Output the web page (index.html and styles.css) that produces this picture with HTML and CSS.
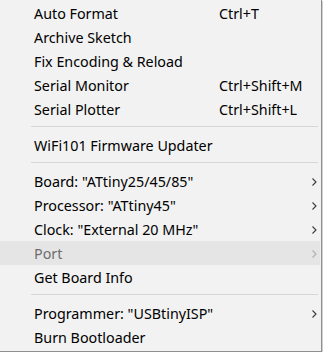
FILE: index.html
```html
<!DOCTYPE html>
<html lang="en">
<head>
    <meta charset="UTF-8">
    <meta name="viewport" content="width=device-width, initial-scale=1.0">
    <title>Tools menu</title>
    <link rel="stylesheet" href="styles.css">
</head>
<body>
    <div class="menu">
        <div class="item"><span>Auto Format</span><span class="accel">Ctrl+T</span></div>
        <div class="item"><span>Archive Sketch</span></div>
        <div class="item"><span>Fix Encoding &amp; Reload</span></div>
        <div class="item"><span>Serial Monitor</span><span class="accel">Ctrl+Shift+M</span></div>
        <div class="item"><span>Serial Plotter</span><span class="accel">Ctrl+Shift+L</span></div>

        <div class="separator"></div>

        <div class="item"><span>WiFi101 Firmware Updater</span></div>

        <div class="separator"></div>

        <div class="item sub"><span>Board: "ATtiny25/45/85"</span>
            <svg class="arrow" width="5" height="8" viewBox="0 0 5 8"><path d="M0.5 0.5 L4 4 L0.5 7.5" fill="none" stroke="currentColor" stroke-width="1.1"/></svg>
        </div>
        <div class="item sub"><span>Processor: "ATtiny45"</span>
            <svg class="arrow" width="5" height="8" viewBox="0 0 5 8"><path d="M0.5 0.5 L4 4 L0.5 7.5" fill="none" stroke="currentColor" stroke-width="1.1"/></svg>
        </div>
        <div class="item sub"><span>Clock: "External 20 MHz"</span>
            <svg class="arrow" width="5" height="8" viewBox="0 0 5 8"><path d="M0.5 0.5 L4 4 L0.5 7.5" fill="none" stroke="currentColor" stroke-width="1.1"/></svg>
        </div>
        <div class="item sub disabled hot"><span>Port</span>
            <svg class="arrow" width="5" height="8" viewBox="0 0 5 8"><path d="M0.5 0.5 L4 4 L0.5 7.5" fill="none" stroke="currentColor" stroke-width="1.1"/></svg>
        </div>
        <div class="item"><span>Get Board Info</span></div>

        <div class="separator"></div>

        <div class="item sub"><span>Programmer: "USBtinyISP"</span>
            <svg class="arrow" width="5" height="8" viewBox="0 0 5 8"><path d="M0.5 0.5 L4 4 L0.5 7.5" fill="none" stroke="currentColor" stroke-width="1.1"/></svg>
        </div>
        <div class="item"><span>Burn Bootloader</span></div>
    </div>
</body>
</html>
```

FILE: styles.css
```css
body {
    margin: 0;
    background-color: #fff;
    font-family: "Noto Sans", "Open Sans", sans-serif;
    font-size: 14.3px;
    color: #000;
}

.menu {
    width: 321px;
    padding: 1px 0 2px 0;
    background-color: #f2f2f2;
    border-right: 1px solid #8f8f8f;
    border-bottom: 1px solid #8f8f8f;
    box-shadow: 1px 1px 0 #cfcfcf;
}

.item {
    display: grid;
    grid-template-columns: 185px 1fr 8px;
    align-items: center;
    height: 23px;
    padding: 1px 0 0 34px;
    margin-right: 1px;
    line-height: 23px;
    white-space: nowrap;
}

.accel {
    grid-column: 2;
}

.arrow {
    grid-column: 3;
    color: #3a3a3a;
    margin-top: 1px;
}

.disabled {
    color: #6d6d6d;
}

.disabled .arrow {
    color: #b0b0b0;
}

.hot {
    background-color: #e5e5e5;
}

.separator {
    height: 12px;
    margin: 0 3px 0 31px;
    background: linear-gradient(#d7d7d7, #d7d7d7) 0 5px / 100% 1px no-repeat;
}
```
